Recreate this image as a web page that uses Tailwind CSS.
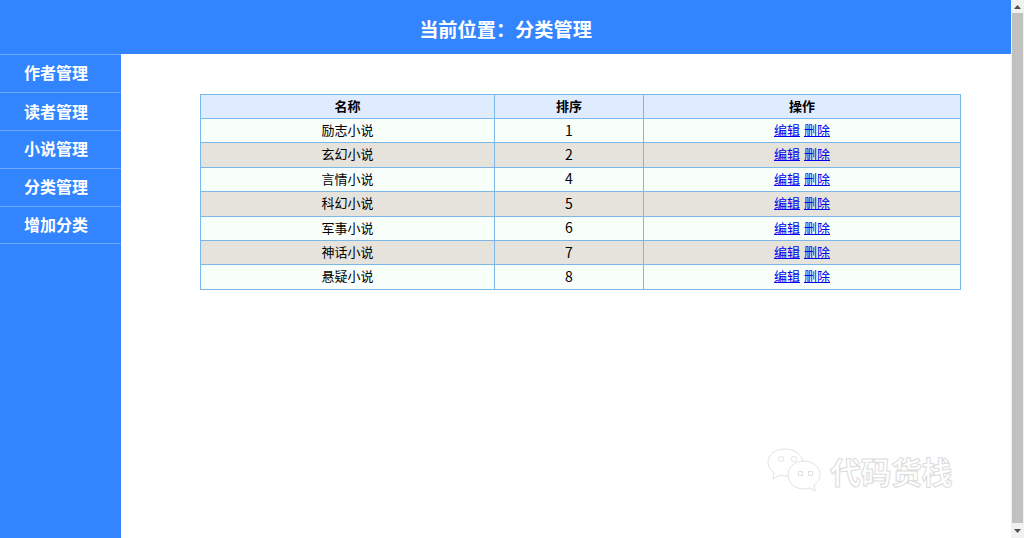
<!DOCTYPE html>
<html lang="zh-CN">
<head>
    <meta charset="UTF-8">
    <title>分类管理</title>
    <script src="https://cdn.jsdelivr.net/npm/@tailwindcss/browser@4"></script>
</head>
<body class="h-[538px] overflow-hidden bg-white font-['Noto_Sans_CJK_SC','Noto_Sans',sans-serif]">
    <div class="flex h-[538px]">
        <!-- Page -->
        <div class="relative flex w-[1011px] flex-col">
            <header class="flex h-[54px] items-center justify-center bg-[#3385ff] pt-[5px] text-[19.2px] font-bold text-white">当前位置：分类管理</header>
            <div class="flex flex-1">
                <!-- Sidebar -->
                <nav class="w-[121px] bg-[#3385ff] text-[16px] font-bold text-white">
                    <a href="#" class="block h-[39px] border-y border-[#6fa9ff] pl-[24px] leading-[35px]">作者管理</a>
                    <a href="#" class="block h-[38px] border-b border-[#6fa9ff] pl-[24px] leading-[36px]">读者管理</a>
                    <a href="#" class="block h-[38px] border-b border-[#6fa9ff] pl-[24px] leading-[34px]">小说管理</a>
                    <a href="#" class="block h-[38px] border-b border-[#6fa9ff] pl-[24px] leading-[34px]">分类管理</a>
                    <a href="#" class="block h-[37px] border-b border-[#6fa9ff] pl-[24px] leading-[34px]">增加分类</a>
                </nav>
                <!-- Table -->
                <main class="flex-1 pt-[40px] pl-[79px]">
                    <table class="w-[761px] table-fixed border-collapse text-center text-[13px] text-black [&_td]:h-[24.4px] [&_td]:border [&_td]:border-[#7ab8e8] [&_td]:p-0 [&_td]:pb-[2px] [&_th]:h-[24px] [&_th]:border [&_th]:border-[#7ab8e8] [&_th]:p-0 [&_th]:pb-[2px]">
                        <thead class="bg-[#dfebff]">
                            <tr><th class="w-[294px]">名称</th><th class="w-[149px]">排序</th><th>操作</th></tr>
                        </thead>
                        <tbody class="[word-spacing:1px]">
                            <tr class="bg-[#f8fffb]"><td>励志小说</td><td class="text-sm">1</td><td><a href="#" class="text-[#0000ee] underline">编辑</a> <a href="#" class="text-[#0000ee] underline">删除</a></td></tr>
                            <tr class="bg-[#e6e3dc]"><td>玄幻小说</td><td class="text-sm">2</td><td><a href="#" class="text-[#0000ee] underline">编辑</a> <a href="#" class="text-[#0000ee] underline">删除</a></td></tr>
                            <tr class="bg-[#f8fffb]"><td>言情小说</td><td class="text-sm">4</td><td><a href="#" class="text-[#0000ee] underline">编辑</a> <a href="#" class="text-[#0000ee] underline">删除</a></td></tr>
                            <tr class="bg-[#e6e3dc]"><td>科幻小说</td><td class="text-sm">5</td><td><a href="#" class="text-[#0000ee] underline">编辑</a> <a href="#" class="text-[#0000ee] underline">删除</a></td></tr>
                            <tr class="bg-[#f8fffb]"><td>军事小说</td><td class="text-sm">6</td><td><a href="#" class="text-[#0000ee] underline">编辑</a> <a href="#" class="text-[#0000ee] underline">删除</a></td></tr>
                            <tr class="bg-[#e6e3dc]"><td>神话小说</td><td class="text-sm">7</td><td><a href="#" class="text-[#0000ee] underline">编辑</a> <a href="#" class="text-[#0000ee] underline">删除</a></td></tr>
                            <tr class="bg-[#f8fffb]"><td>悬疑小说</td><td class="text-sm">8</td><td><a href="#" class="text-[#0000ee] underline">编辑</a> <a href="#" class="text-[#0000ee] underline">删除</a></td></tr>
                        </tbody>
                    </table>
                </main>
            </div>
            <!-- Watermark -->
            <div class="absolute top-[448px] left-[766px] flex items-center gap-[4px]">
                <svg width="60" height="44" viewBox="0 0 60 44" fill="none" stroke="#e2e2e2" stroke-width="1">
                    <path d="M19 1C9 1 2 7 2 14c0 4 2 8 6 10l-1 7 7-4c2 1 4 1 6 1 2 0 3 0 4-1" fill="#fff"/>
                    <path d="M19 1c9 0 16 5 18 12" />
                    <rect x="12.500" y="8.500" width="5" height="5" rx="2"/>
                    <rect x="25.500" y="8.500" width="5" height="5" rx="2"/>
                    <path d="M38 13c-9 0-16 6-16 14s7 14 16 14c2 0 3 0 5-1l6 3-1-6c4-3 6-6 6-10 0-8-7-14-16-14z" fill="#fff"/>
                    <rect x="32.500" y="23.500" width="4" height="4"/>
                    <rect x="42.500" y="23.500" width="4" height="4"/>
                </svg>
                <span class="text-[31px] leading-none font-bold tracking-[-0.5px] text-white [-webkit-text-stroke:1px_#dcdcdc]">代码货栈</span>
            </div>
        </div>
        <!-- Scrollbar -->
        <div class="flex w-[13px] flex-col bg-[#f1f1f1]">
            <div class="flex h-[13px] items-center justify-center">
                <svg width="7" height="4" viewBox="0 0 7 4"><path d="M3.500 0L7 4H0z" fill="#505050"/></svg>
            </div>
            <div class="mx-[1px] h-[510px] bg-[#c1c1c1]"></div>
            <div class="flex flex-1 items-center justify-center">
                <svg width="7" height="4" viewBox="0 0 7 4"><path d="M0 0h7L3.500 4z" fill="#505050"/></svg>
            </div>
        </div>
    </div>
</body>
</html>
